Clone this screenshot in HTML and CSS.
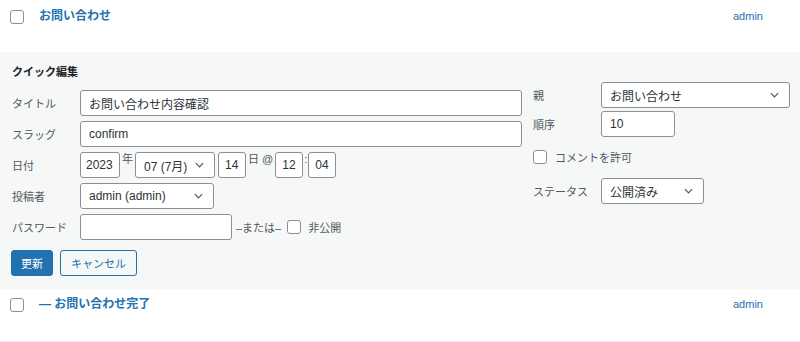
FILE: index.html
```html
<!DOCTYPE html>
<html lang="ja">
<head>
    <meta charset="UTF-8">
    <title>固定ページ - クイック編集</title>
    <link rel="stylesheet" href="styles.css">
</head>
<body>
    <div class="list-row">
        <span class="check"></span>
        <a class="row-title" href="#">お問い合わせ</a>
        <a class="row-author" href="#">admin</a>
    </div>

    <div class="quick-edit">
        <div class="edit-cols">
            <div class="col-left">
                <h4 class="edit-legend">クイック編集</h4>

                <div class="field">
                    <span class="field-label">タイトル</span>
                    <input class="text-input input-title" type="text" value="お問い合わせ内容確認">
                </div>

                <div class="field">
                    <span class="field-label">スラッグ</span>
                    <input class="text-input input-title" type="text" value="confirm">
                </div>

                <div class="field">
                    <span class="field-label">日付</span>
                    <input class="text-input input-year" type="text" value="2023">
                    <span class="date-sep">年</span>
                    <div class="select select-month">
                        <span>07 (7月)</span>
                        <svg class="chevron" viewBox="0 0 10 6"><path d="M1 1l4 4 4-4" /></svg>
                    </div>
                    <input class="text-input input-short input-day" type="text" value="14">
                    <span class="date-sep">日 @</span>
                    <input class="text-input input-short" type="text" value="12">
                    <span class="date-sep colon">:</span>
                    <input class="text-input input-short" type="text" value="04">
                </div>

                <div class="field">
                    <span class="field-label">投稿者</span>
                    <div class="select select-author">
                        <span>admin (admin)</span>
                        <svg class="chevron" viewBox="0 0 10 6"><path d="M1 1l4 4 4-4" /></svg>
                    </div>
                </div>

                <div class="field">
                    <span class="field-label">パスワード</span>
                    <input class="text-input input-password" type="text" value="">
                    <span class="or-text">–または–</span>
                    <span class="check check-inline"></span>
                    <span class="check-text">非公開</span>
                </div>
            </div>

            <div class="col-right">
                <div class="field">
                    <span class="field-label label-right">親</span>
                    <div class="select select-parent">
                        <span>お問い合わせ</span>
                        <svg class="chevron" viewBox="0 0 10 6"><path d="M1 1l4 4 4-4" /></svg>
                    </div>
                </div>

                <div class="field field-order">
                    <span class="field-label label-right">順序</span>
                    <input class="text-input input-order" type="text" value="10">
                </div>

                <div class="check-row">
                    <span class="check"></span>
                    <span class="check-text">コメントを許可</span>
                </div>

                <div class="field field-status">
                    <span class="field-label label-right">ステータス</span>
                    <div class="select select-status">
                        <span>公開済み</span>
                        <svg class="chevron" viewBox="0 0 10 6"><path d="M1 1l4 4 4-4" /></svg>
                    </div>
                </div>
            </div>
        </div>

        <div class="actions">
            <button class="button button-primary" type="button">更新</button>
            <button class="button button-cancel" type="button">キャンセル</button>
        </div>
    </div>

    <div class="list-row list-row-last">
        <span class="check"></span>
        <a class="row-title" href="#">— お問い合わせ完了</a>
        <a class="row-author" href="#">admin</a>
    </div>
</body>
</html>
```

FILE: styles.css
```css
body {
    font-family: "Liberation Sans", "Noto Sans CJK JP", sans-serif;
    font-size: 11px;
    color: #3c434a;
    margin: 0;
    padding: 0;
    background-color: #ffffff;
}

a {
    color: #2271b1;
    text-decoration: none;
}

/* list rows */

.list-row {
    display: flex;
    align-items: flex-start;
    height: 52px;
    box-sizing: border-box;
    padding: 8px 0 0 10px;
}

.list-row-last {
    height: 53px;
    padding-top: 7px;
    border-bottom: 1px solid #f0f0f1;
}

.list-row .check {
    margin-top: 2px;
}

.row-title {
    font-size: 12px;
    font-weight: bold;
    line-height: 16px;
    margin-left: 15px;
    flex: 1;
}

.row-author {
    font-size: 11px;
    line-height: 16px;
    width: 67px;
}

.check {
    display: inline-block;
    width: 14px;
    height: 14px;
    box-sizing: border-box;
    border: 1px solid #8c8f94;
    border-radius: 3px;
    background-color: #ffffff;
    flex-shrink: 0;
}

/* quick edit panel */

.quick-edit {
    background-color: #f6f7f7;
    height: 237px;
    box-sizing: border-box;
    padding: 0 10px 0 11px;
}

.edit-cols {
    display: flex;
    align-items: flex-start;
}

.col-left {
    width: 511px;
    display: flex;
    flex-direction: column;
    gap: 5px;
}

.col-right {
    flex: 1;
    margin-left: 11px;
    padding-top: 30px;
}

.edit-legend {
    font-size: 11px;
    font-weight: bold;
    color: #1d2327;
    line-height: 14px;
    margin: 13px 0 6px 1px;
}

.field {
    display: flex;
    align-items: center;
    height: 26px;
}

.field-label {
    width: 68px;
    padding-left: 1px;
    flex-shrink: 0;
    color: #50575e;
}

.label-right {
    width: 68px;
    padding-left: 0;
}

.text-input {
    height: 26px;
    box-sizing: border-box;
    border: 1px solid #8c8f94;
    border-radius: 3px;
    background-color: #ffffff;
    font-family: "Liberation Sans", "Noto Sans CJK JP", sans-serif;
    font-size: 12px;
    color: #2c3338;
    padding: 0 8px;
    margin: 0;
    outline: none;
}

.input-title {
    width: 442px;
}

.input-year {
    width: 40px;
    padding: 0 5px;
}

.input-short {
    width: 28px;
    padding: 0 6px;
}

.input-day {
    margin-left: 3px;
}

.input-password {
    width: 152px;
}

.input-order {
    width: 74px;
}

.date-sep {
    align-self: flex-start;
    line-height: 14px;
    padding: 0 2px;
    color: #50575e;
}

.date-sep.colon {
    padding: 0 1px;
}

.select {
    display: flex;
    align-items: center;
    justify-content: space-between;
    height: 26px;
    box-sizing: border-box;
    border: 1px solid #8c8f94;
    border-radius: 3px;
    background-color: #ffffff;
    font-size: 12px;
    color: #2c3338;
    padding: 0 10px 0 8px;
}

.chevron {
    width: 9px;
    height: 6px;
}

.chevron path {
    fill: none;
    stroke: #50575e;
    stroke-width: 1.3;
}

.select-month {
    width: 80px;
}

.select-author {
    width: 134px;
}

.select-parent {
    width: 189px;
}

.select-status {
    width: 103px;
}

.or-text {
    margin-left: 4px;
    color: #50575e;
}

.check-inline {
    margin-left: 6px;
}

.check-text {
    margin-left: 7px;
    color: #50575e;
}

.field-order {
    margin-top: 3px;
}

.check-row {
    display: flex;
    align-items: center;
    height: 14px;
    margin-top: 13px;
}

.check-row .check-text {
    margin-left: 8px;
}

.field-status {
    margin-top: 14px;
}

/* buttons */

.actions {
    display: flex;
    gap: 7px;
    margin-top: 10px;
}

.button {
    height: 26px;
    box-sizing: border-box;
    font-family: "Liberation Sans", "Noto Sans CJK JP", sans-serif;
    font-size: 11px;
    border-radius: 3px;
    padding: 0 9px;
    cursor: pointer;
}

.button-primary {
    background-color: #2271b1;
    border: 1px solid #2271b1;
    color: #ffffff;
}

.button-cancel {
    background-color: #f6f7f7;
    border: 1px solid #2271b1;
    color: #2271b1;
    padding: 0 10px;
}
```
